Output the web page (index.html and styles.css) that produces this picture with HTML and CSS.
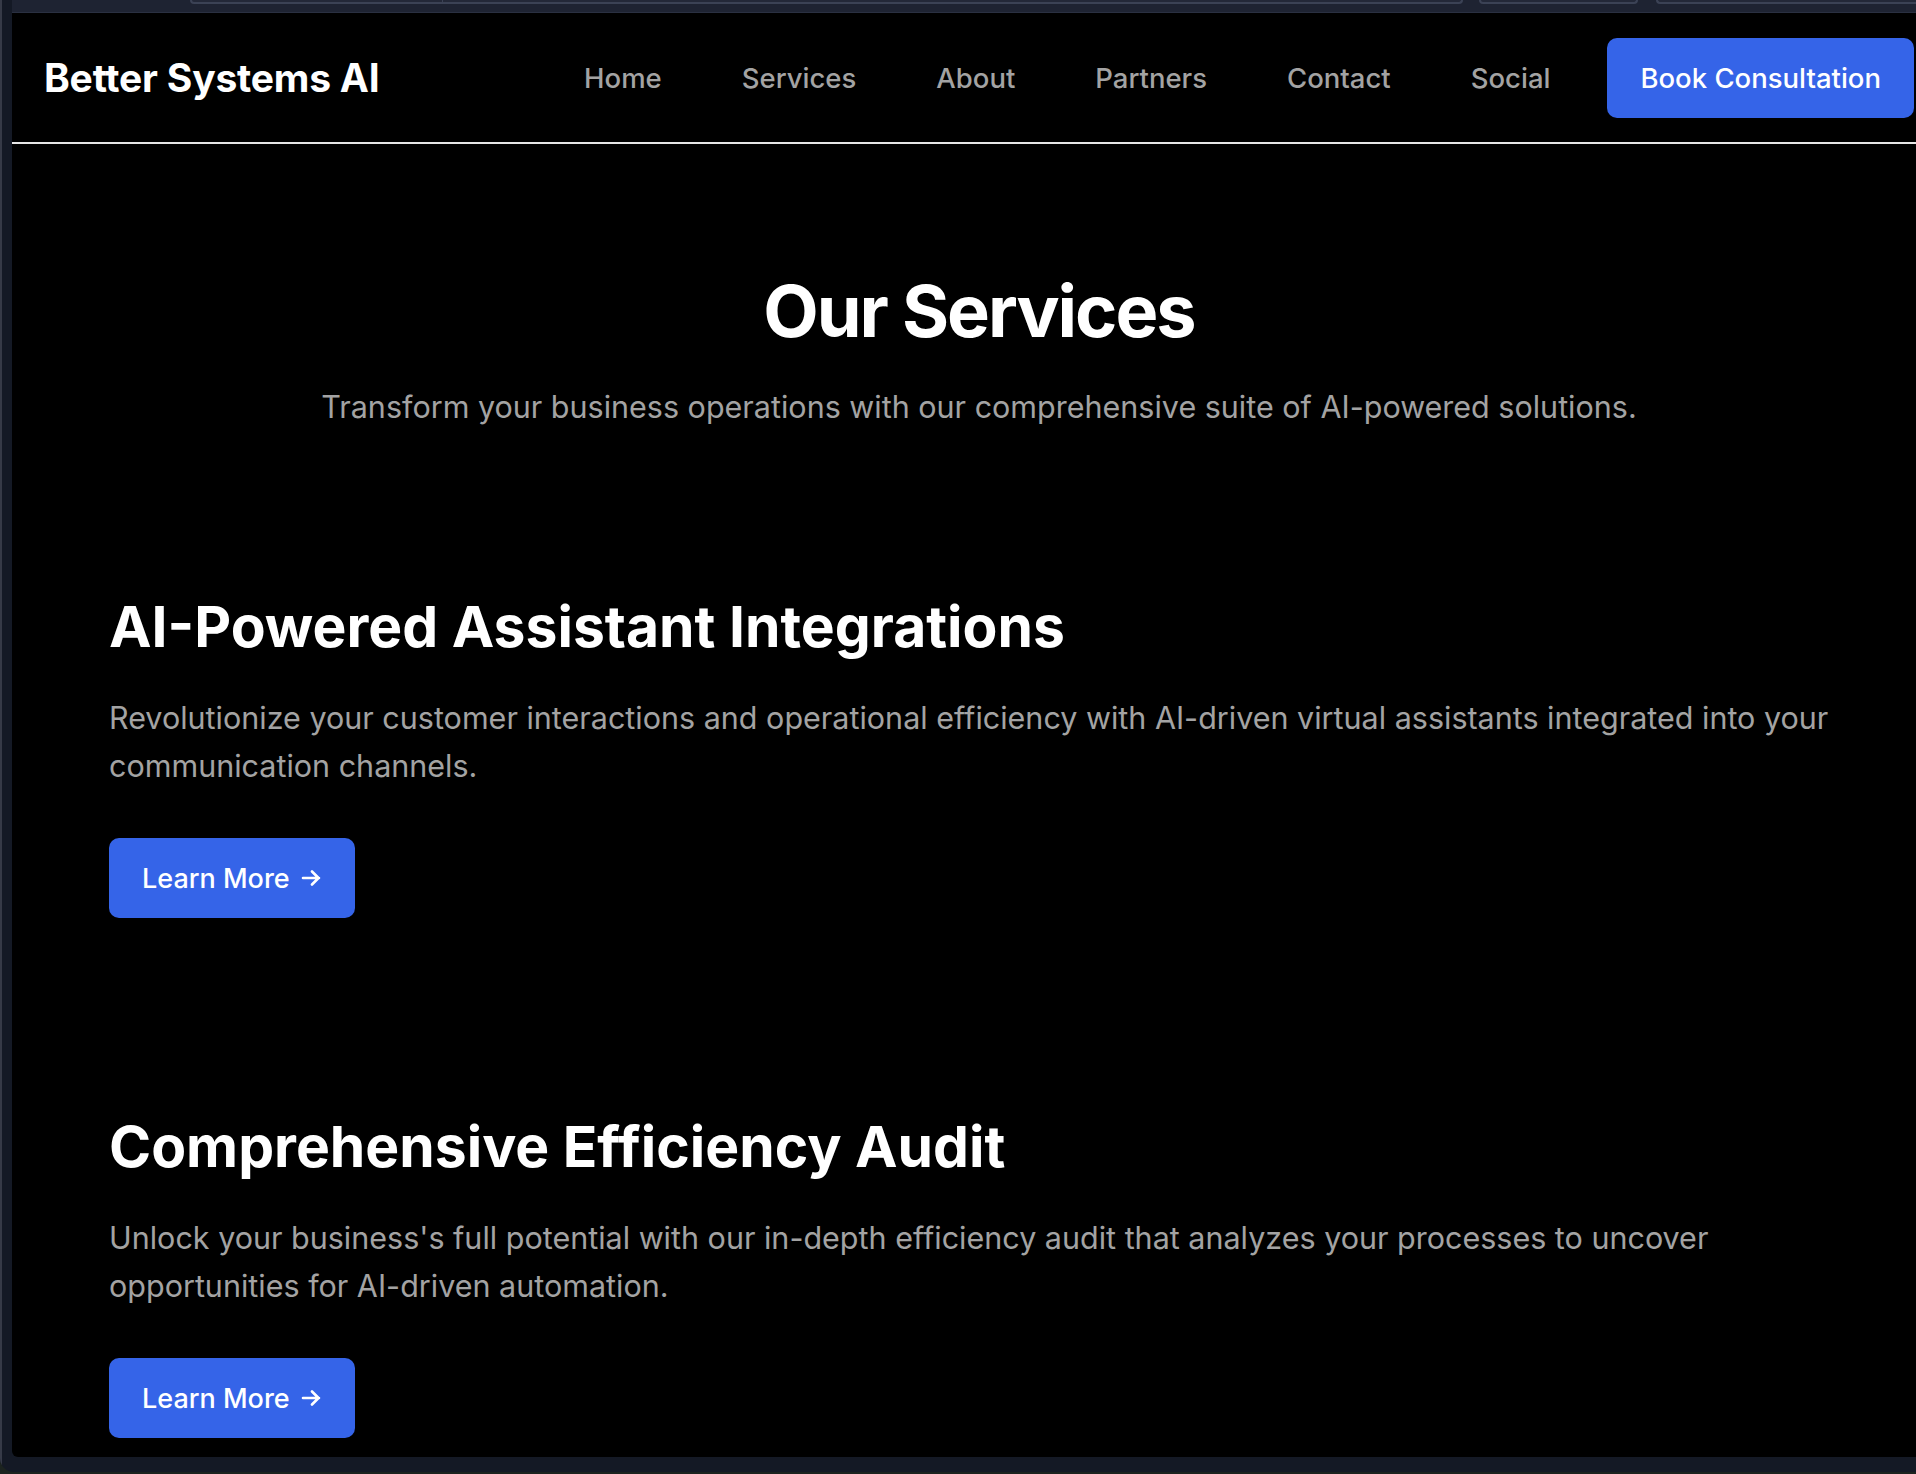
FILE: index.html
```html
<!DOCTYPE html>
<html lang="en">
<head>
<meta charset="utf-8">
<title>Better Systems AI – Our Services</title>
<link rel="stylesheet" href="styles.css">
</head>
<body>
<div class="window">
  <div class="rail"></div>
  <div class="browser">
    <div class="tabstrip">
      <span class="tab tab-a"></span>
      <span class="tab tab-b"></span>
      <span class="tab tab-c"></span>
    </div>
    <div class="viewport">
      <header class="nav">
        <a class="logo" href="#">Better Systems AI</a>
        <nav class="links">
          <a href="#">Home</a>
          <a href="#">Services</a>
          <a href="#">About</a>
          <a href="#">Partners</a>
          <a href="#">Contact</a>
          <a href="#">Social</a>
        </nav>
        <a class="cta" href="#">Book Consultation</a>
      </header>
      <main class="services">
        <section class="intro">
          <h1>Our Services</h1>
          <p>Transform your business operations with our comprehensive suite of AI-powered solutions.</p>
        </section>
        <div class="service-list">
          <article class="service">
            <h2>AI-Powered Assistant Integrations</h2>
            <p>Revolutionize your customer interactions and operational efficiency with AI-driven virtual assistants integrated into your communication channels.</p>
            <a class="btn" href="#">Learn More
              <svg class="arrow" viewBox="0 0 20 16" width="20" height="16" aria-hidden="true"><path d="M2 8h16M11 1.5 17.5 8 11 14.5" fill="none" stroke="currentColor" stroke-width="2.6" stroke-linecap="round" stroke-linejoin="round"/></svg>
            </a>
          </article>
          <article class="service">
            <h2>Comprehensive Efficiency Audit</h2>
            <p>Unlock your business's full potential with our in-depth efficiency audit that analyzes your processes to uncover opportunities for AI-driven automation.</p>
            <a class="btn" href="#">Learn More
              <svg class="arrow" viewBox="0 0 20 16" width="20" height="16" aria-hidden="true"><path d="M2 8h16M11 1.5 17.5 8 11 14.5" fill="none" stroke="currentColor" stroke-width="2.6" stroke-linecap="round" stroke-linejoin="round"/></svg>
            </a>
          </article>
        </div>
      </main>
    </div>
  </div>
</div>
</body>
</html>
```

FILE: styles.css
```css
html, body {
  margin: 0;
  padding: 0;
  background: #1c231f;
  overflow: hidden;
}

body {
  font-family: Inter, "Noto Sans", "Liberation Sans", sans-serif;
}

a {
  text-decoration: none;
}

.window {
  display: flex;
  width: 1916px;
  height: 1472px;
  background: #141925;
  border-bottom-left-radius: 14px;
  overflow: hidden;
}

.rail {
  flex: none;
  width: 12px;
  border-left: 2px solid #363a47;
  box-sizing: border-box;
}

.browser {
  flex: none;
  width: 1934px;
  display: flex;
  flex-direction: column;
}

.tabstrip {
  flex: none;
  height: 13px;
  display: flex;
  align-items: flex-start;
  background: #1e2332;
  border-bottom: 1px solid #2a3041;
  box-sizing: border-box;
}

.tab {
  height: 4px;
  background: #232838;
  border: 2px solid #3b4255;
  border-top: none;
  border-radius: 0 0 7px 7px;
  box-sizing: border-box;
}

.tab-a {
  margin-left: 178px;
  width: 1273px;
  position: relative;
}

.tab-a::after {
  content: "";
  position: absolute;
  left: 250px;
  top: 0;
  width: 1px;
  height: 3px;
  background: #3b4255;
}

.tab-b {
  margin-left: 16px;
  width: 159px;
}

.tab-c {
  margin-left: 18px;
  flex: 1;
  border-right: none;
  border-bottom-right-radius: 0;
}

.viewport {
  flex: none;
  height: 1444px;
  background: #000;
  border-bottom-left-radius: 6px;
  overflow: hidden;
}

/* Navigation */
.nav {
  height: 131px;
  box-sizing: border-box;
  display: flex;
  align-items: center;
  padding: 0 32px;
  border-bottom: 2px solid #e6e6e6;
}

.logo {
  font-size: 39px;
  font-weight: 700;
  color: #fff;
  letter-spacing: -0.2px;
}

.links {
  margin-left: auto;
  margin-right: 57px;
  display: flex;
  gap: 80px;
}

.links a {
  font-size: 27.5px;
  font-weight: 500;
  color: #a3a3a3;
}

.cta {
  display: flex;
  align-items: center;
  height: 80px;
  padding: 0 33px;
  box-sizing: border-box;
  background: #3564e8;
  border-radius: 10px;
  color: #fff;
  font-size: 27.5px;
  font-weight: 500;
}

/* Main */
.services {
  padding: 131px 97px 0;
}

.intro {
  text-align: center;
}

.intro h1 {
  margin: 0;
  font-size: 72px;
  line-height: 1;
  font-weight: 700;
  color: #fff;
  letter-spacing: -2px;
}

.intro p {
  margin: 39px 0 0;
  font-size: 30.5px;
  line-height: 42px;
  color: #a3a3a3;
}

.service-list {
  margin-top: 166px;
  display: flex;
  flex-direction: column;
  gap: 196px;
}

.service {
  display: flex;
  flex-direction: column;
  align-items: flex-start;
}

.service h2 {
  margin: 0;
  font-size: 57px;
  line-height: 66px;
  font-weight: 700;
  color: #fff;
  letter-spacing: 0;
}

.service p {
  margin: 34px 0 0;
  font-size: 30.5px;
  line-height: 48px;
  color: #a3a3a3;
}

.btn {
  margin-top: 48px;
  display: inline-flex;
  align-items: center;
  gap: 11px;
  height: 80px;
  padding: 0 34px 0 33px;
  box-sizing: border-box;
  background: #3564e8;
  border-radius: 10px;
  color: #fff;
  font-size: 27px;
  font-weight: 500;
}

.arrow {
  display: block;
  flex: none;
}
```
